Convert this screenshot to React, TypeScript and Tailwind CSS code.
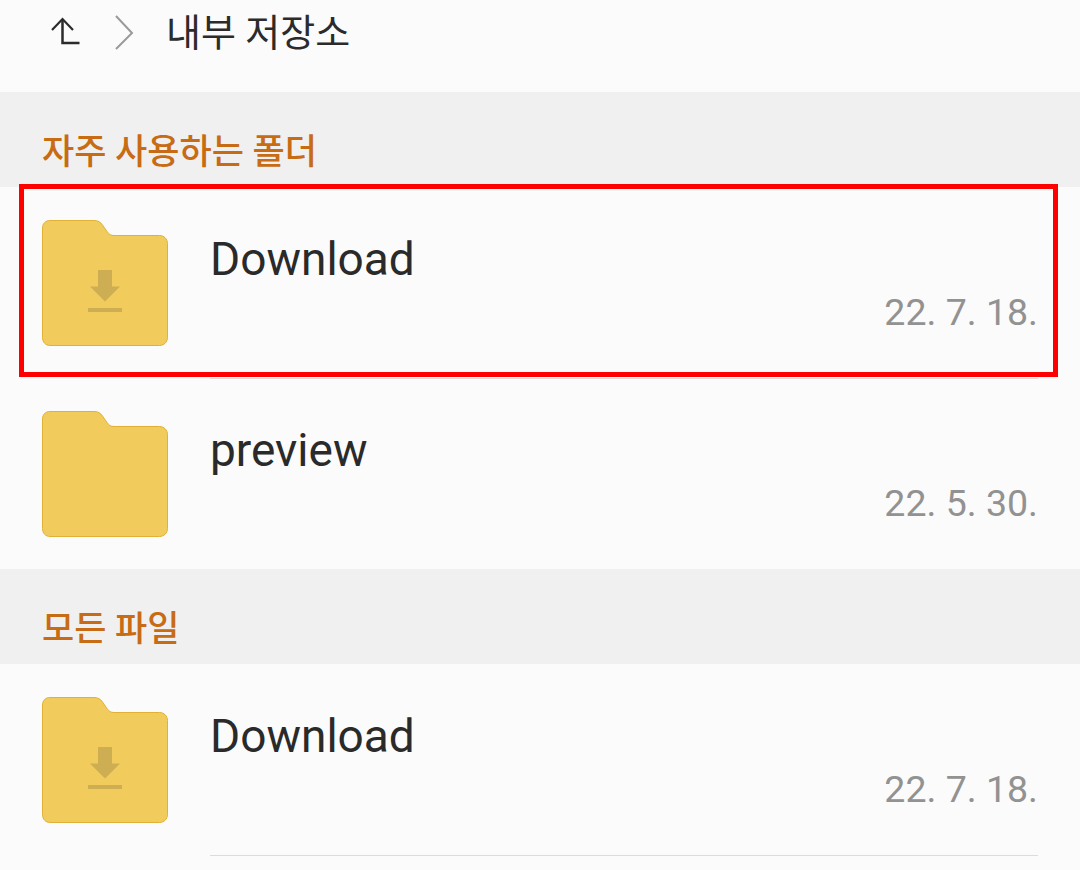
const kr = "font-['Roboto','Noto_Sans_CJK_KR',sans-serif]"

function Folder({ download }: { download?: boolean }) {
  return (
    <svg width="126" height="126" viewBox="0 0 126 126" className="shrink-0">
      <path
        d="M8 .5H52C56 .5 58.500 2 60.500 5L65 11.500C67 14.500 69 15.500 72 15.500H117.500C122 15.500 125.500 19 125.500 23.500V117.500C125.500 122 122 125.500 117.500 125.500H8C3.500 125.500 .5 122 .5 117.500V8C.5 3.500 3.500 .5 8 .5Z"
        fill="#f1cc5c"
        stroke="#e0b135"
      />
      {download && (
        <g fill="#cdae52">
          <path d="M56 50H70V66.500H78L63 81.500L48 66.500H56Z" />
          <rect x="46" y="88" width="34" height="4" />
        </g>
      )}
    </svg>
  )
}

function SectionHeader({ title }: { title: string }) {
  return (
    <div className="h-[95px] bg-[#f0f0f0] pl-[42px] pt-[37px]">
      <div className={`${kr} text-[35px] leading-[48px] font-medium text-[#c76b14]`}>{title}</div>
    </div>
  )
}

function FolderRow({ name, date, download, line }: { name: string; date: string; download?: boolean; line?: boolean }) {
  return (
    <div className="flex h-[191px] pl-[42px] pr-[42px] pt-[33px]">
      <Folder download={download} />
      <div className={`ml-[42px] flex h-[159px] flex-1 flex-col pt-[13px] ${line ? 'border-b border-[#dcdcdc]' : ''}`}>
        <div className={`${kr} text-[46px] leading-[52px] text-[#2a2a2a]`}>{name}</div>
        <div className={`${kr} mt-[4px] text-right text-[37.500px] leading-[46px] text-[#929292]`}>{date}</div>
      </div>
    </div>
  )
}

export default function App() {
  return (
    <div className="relative h-[870px] w-[1080px] overflow-hidden bg-[#fbfbfb]">
      <div className="flex h-[92px] items-start pl-[50px] pt-[9px]">
        <svg width="32" height="34" viewBox="0 0 32 34" className="mt-[7px]" fill="none" stroke="#2b2b2b" strokeWidth="2.500">
          <path d="M2 14L12.500 3L23 14" strokeWidth="2.200" />
          <path d="M12.500 3.500V27H29.500" />
        </svg>
        <svg width="20" height="36" viewBox="0 0 20 36" className="ml-[32px] mt-[6px]" fill="none" stroke="#9a9a9a" strokeWidth="2">
          <path d="M2 1L18 18L2 34" />
        </svg>
        <div className={`${kr} ml-[32px] text-[38px] leading-[48px] text-[#2b2b2b]`}>내부 저장소</div>
      </div>
      <SectionHeader title="자주 사용하는 폴더" />
      <FolderRow name="Download" date="22. 7. 18." download line />
      <FolderRow name="preview" date="22. 5. 30." />
      <SectionHeader title="모든 파일" />
      <FolderRow name="Download" date="22. 7. 18." download line />
      <div className="pointer-events-none absolute left-[19px] top-[184px] h-[193px] w-[1039px] border-[5px] border-[#ff0000]" />
    </div>
  )
}
